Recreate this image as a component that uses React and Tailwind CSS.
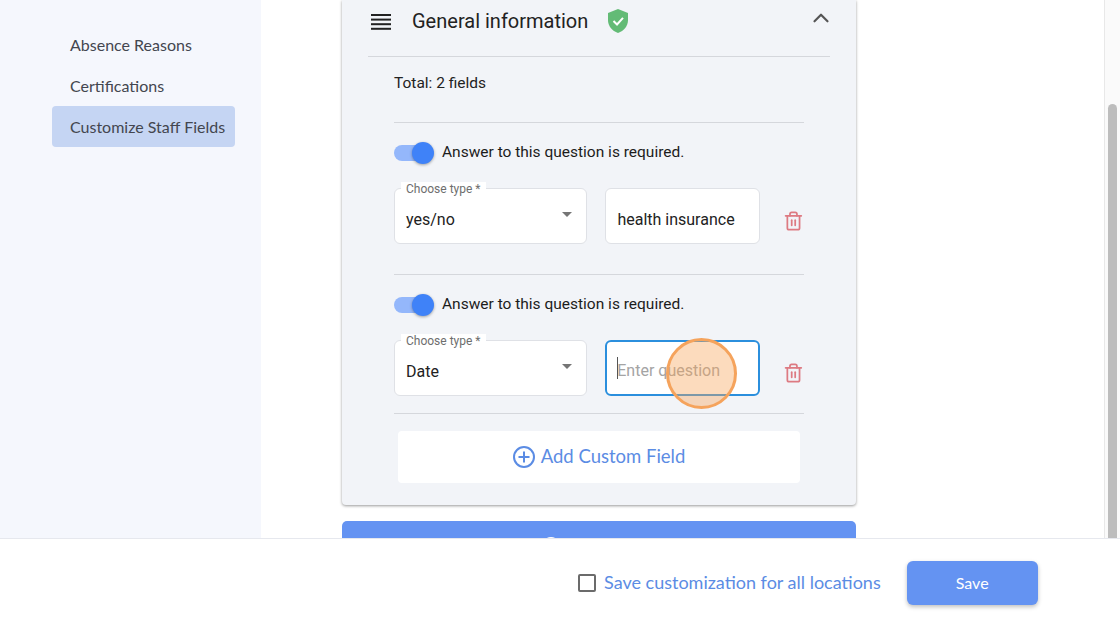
import React from "react";
import { ChevronUp, Trash2 } from "lucide-react";

const roboto = "font-['Roboto','Liberation_Sans',sans-serif]";
const lato = "font-['Lato','Open_Sans',sans-serif]";

function Toggle() {
  return (
    <div className="relative w-[40px] h-[16px]">
      <div className="w-[34px] h-[16px] rounded-full bg-[#94b7fb]" />
      <div className="absolute right-0 top-[-3px] w-[22px] h-[22px] rounded-full bg-[#3f82f8] shadow-[0_1px_3px_rgba(0,0,0,0.35)]" />
    </div>
  );
}

function TypeSelect({ value }) {
  return (
    <div className="relative w-[218px] h-[56px] bg-white rounded-[6px] border border-[#dfe1e6] pl-[11px] pr-[14px] flex items-center justify-between">
      <span className={`absolute left-[6px] top-[-7px] px-[5px] bg-white text-[12px] leading-[14px] text-[#6e6e6e] ${roboto}`}>Choose type *</span>
      <span className={`text-[16px] text-[#222] mt-[7px] ${roboto}`}>{value}</span>
      <span className="w-0 h-0 mb-[3px] border-l-[5.5px] border-r-[5.5px] border-t-[5.5px] border-l-transparent border-r-transparent border-t-[#757575]" />
    </div>
  );
}

function FieldRow({ type, children, focused }) {
  return (
    <div className="flex flex-col">
      <div className="flex items-center gap-[8px] h-[24px]">
        <Toggle />
        <span className={`text-[15.5px] text-[#1c1c1c] ${roboto}`}>Answer to this question is required.</span>
      </div>
      <div className="flex items-start mt-[23px] gap-[18px]">
        <TypeSelect value={type} />
        <div className={`relative w-[174px] h-[56px] bg-white rounded-[6px] px-[11px] flex items-center ${focused ? "border-2 border-[#2b8fdd]" : "border border-[#dfe1e6]"}`}>
          {children}
        </div>
        <Trash2 className="w-[24px] h-[24px] mt-[21px] ml-[5px] text-[#dd7a82]" strokeWidth={2} />
      </div>
    </div>
  );
}

export default function App() {
  return (
    <div className="relative w-[1120px] h-[626px] overflow-hidden bg-white flex flex-col">
      <div className="h-[538px] flex shrink-0 overflow-hidden">
        <aside className={`w-[261px] shrink-0 bg-[#f5f7fd] pl-[52px] pt-[24px] text-[16px] text-[#43464f] ${lato}`}>
          <div className="w-[183px] h-[41px] pl-[18px] flex items-center">Absence Reasons</div>
          <div className="w-[183px] h-[41px] pl-[18px] flex items-center">Certifications</div>
          <div className="w-[183px] h-[41px] pl-[18px] flex items-center rounded-[4px] bg-[#c5d5f3]">Customize Staff Fields</div>
        </aside>

        <main className="flex-1 pl-[81px] overflow-hidden">
          <section className="w-[514px] h-[505px] bg-[#f2f4f8] rounded-b-[4px] shadow-[0_1px_3px_rgba(0,0,0,0.4)]">
            <div className="relative h-[57px] mx-[26px] border-b border-[#d5d7dc] flex items-start pt-[6px]">
              <svg className="ml-[3px] mt-[8px] w-[20px] h-[16px]" viewBox="0 0 20 16" fill="#222">
                <rect y="0" width="20" height="2" />
                <rect y="4.6" width="20" height="2" />
                <rect y="9.2" width="20" height="2" />
                <rect y="13.8" width="20" height="2" />
              </svg>
              <span className={`ml-[21px] text-[20px] leading-[30px] text-[#222] ${roboto}`}>General information</span>
              <svg className="ml-[19px] mt-[2px] w-[22px] h-[26px]" viewBox="0 0 22 26">
                <path d="M11 1 L21 5 V12 C21 18 17 23 11 25 C5 23 1 18 1 12 V5 Z" fill="#63bb76" />
                <path d="M6.5 13 L10 16.5 L16 9.8" fill="none" stroke="#fff" strokeWidth="2" />
              </svg>
              <ChevronUp className="absolute right-[-4px] top-[5px] w-[26px] h-[26px] text-[#555]" strokeWidth={2} />
            </div>

            <div className="pl-[52px] pr-[52px]">
              <div className={`h-[66px] pt-[15px] border-b border-[#d5d7dc] text-[15.5px] leading-[22px] text-[#222] ${roboto}`}>Total: 2 fields</div>
              <div className="pt-[18px] pb-[30px] border-b border-[#d5d7dc]">
                <FieldRow type="yes/no">
                  <span className={`text-[16px] text-[#222] mt-[7px] ${roboto}`}>health insurance</span>
                </FieldRow>
              </div>
              <div className="pt-[18px] pb-[17px] border-b border-[#d5d7dc]">
                <FieldRow type="Date" focused>
                  <span className="absolute left-[10px] top-[15px] w-px h-[22px] bg-[#555]" />
                  <span className={`text-[16px] text-[#a4a4a4] mt-[5px] ml-[-1px] ${roboto}`}>Enter question</span>
                </FieldRow>
              </div>
              <button className={`mt-[17px] ml-[4px] w-[402px] h-[52px] bg-white rounded-[4px] flex items-center justify-center gap-[6px] text-[#5b8ce4] text-[18.5px] ${lato}`}>
                <svg className="w-[22px] h-[22px]" viewBox="0 0 22 22" fill="none" stroke="#5b8ce4" strokeWidth="2">
                  <circle cx="11" cy="11" r="10" />
                  <path d="M11 5.5V16.5M5.5 11H16.5" />
                </svg>
                Add Custom Field
              </button>
            </div>
          </section>

          <section className="relative mt-[16px] w-[514px] h-[40px] bg-[#6493f2] rounded-t-[5px]">
            <span className="absolute left-[200px] top-[16px] w-[18px] h-[18px] rounded-full bg-white" />
          </section>
        </main>

        <div className="w-[16px] shrink-0 bg-[#fafafa] border-l border-[#e8e8e8] flex flex-col pt-[104px] pl-[3px]">
          <div className="w-[9px] flex-1 rounded-t-full bg-[#bdbdbd]" />
        </div>
      </div>

      <footer className="flex-1 border-t border-[#e6e8ee] bg-white flex items-start pl-[578px] pt-[22px]">
        <div className="h-[43px] flex items-center">
          <span className="w-[18px] h-[18px] border-2 border-[#6b6b6b] rounded-[2px]" />
          <span className={`ml-[8px] text-[18px] text-[#5b8ce4] ${lato}`}>Save customization for all locations</span>
        </div>
        <button className={`ml-[26px] w-[131px] h-[44px] rounded-[6px] bg-[#6493f2] text-white text-[16px] shadow-[0_2px_4px_rgba(0,0,0,0.25)] ${lato}`}>Save</button>
      </footer>

      <div className="absolute left-[666px] top-[338px] w-[71px] h-[71px] rounded-full bg-[#f8a45a]/40 border-[3px] border-[#f5a35c]" />
    </div>
  );
}
